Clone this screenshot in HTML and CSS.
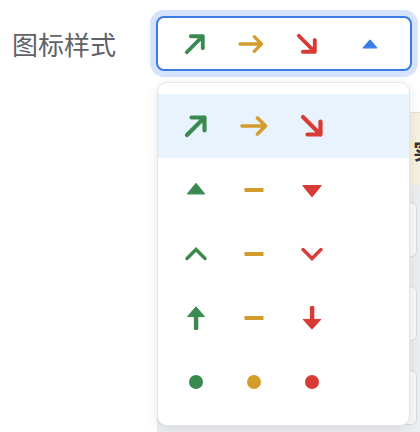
FILE: index.html
```html
<!DOCTYPE html>
<html lang="zh">
<head>
<meta charset="utf-8">
<title>图标样式</title>
<link rel="stylesheet" href="styles.css">
</head>
<body>
<div class="page">
  <div class="row">
    <div class="label">图标样式</div>
    <div class="select">
      <div class="sel-icons">
        <span class="cell green"><svg class="ico-s" viewBox="0 0 24 24"><path d="M3 21L20.5 3.5M7.5 3.5H20.5V16.5" fill="none" stroke="currentColor" stroke-width="4.2" stroke-linecap="round" stroke-linejoin="round"/></svg></span>
        <span class="cell orange"><svg class="ico-w-s" viewBox="0 0 28 24"><path d="M2 12H25.5M17.5 4L25.5 12L17.5 20" fill="none" stroke="currentColor" stroke-width="3.6" stroke-linecap="round" stroke-linejoin="round"/></svg></span>
        <span class="cell red"><svg class="ico-s" viewBox="0 0 24 24"><path d="M3 3L20.5 20.5M20.5 7.5V20.5H7.5" fill="none" stroke="currentColor" stroke-width="4.2" stroke-linecap="round" stroke-linejoin="round"/></svg></span>
      </div>
      <svg class="caret" viewBox="0 0 16 10"><path d="M8 1.2L14.8 8.8H1.2Z" fill="currentColor" stroke="currentColor" stroke-width="1.2" stroke-linejoin="round"/></svg>
    </div>
  </div>

  <div class="behind">
    <div class="notice">实时数据提示</div>
    <div class="cards">
      <div class="card"></div>
      <div class="card"></div>
      <div class="card"></div>
    </div>
  </div>

  <div class="dropdown">
    <div class="opt active">
      <span class="cell green"><svg class="ico" viewBox="0 0 24 24"><path d="M3 21L20.5 3.5M7.5 3.5H20.5V16.5" fill="none" stroke="currentColor" stroke-width="4.2" stroke-linecap="round" stroke-linejoin="round"/></svg></span>
      <span class="cell orange"><svg class="ico-w" viewBox="0 0 28 24"><path d="M2 12H25.5M17.5 4L25.5 12L17.5 20" fill="none" stroke="currentColor" stroke-width="3.6" stroke-linecap="round" stroke-linejoin="round"/></svg></span>
      <span class="cell red"><svg class="ico" viewBox="0 0 24 24"><path d="M3 3L20.5 20.5M20.5 7.5V20.5H7.5" fill="none" stroke="currentColor" stroke-width="4.2" stroke-linecap="round" stroke-linejoin="round"/></svg></span>
    </div>
    <div class="opt">
      <span class="cell green"><svg class="ico" viewBox="0 0 24 24"><path d="M3.5 15.8H20.5L12 5.6Z" fill="currentColor" stroke="currentColor" stroke-width="1.2" stroke-linejoin="round"/></svg></span>
      <span class="cell orange"><svg class="ico" viewBox="0 0 24 24"><rect x="2.5" y="10" width="19" height="4" rx="0.6" fill="currentColor"/></svg></span>
      <span class="cell red"><svg class="ico" viewBox="0 0 24 24"><path d="M3 7.6H21L12 18.6Z" fill="currentColor" stroke="currentColor" stroke-width="1.2" stroke-linejoin="round"/></svg></span>
    </div>
    <div class="opt">
      <span class="cell green"><svg class="ico" viewBox="0 0 24 24"><path d="M3 16.5L12 7.5L21 16.5" fill="none" stroke="currentColor" stroke-width="3.4" stroke-linecap="round" stroke-linejoin="miter"/></svg></span>
      <span class="cell orange"><svg class="ico" viewBox="0 0 24 24"><rect x="2.5" y="10" width="19" height="4" rx="0.6" fill="currentColor"/></svg></span>
      <span class="cell red"><svg class="ico" viewBox="0 0 24 24"><path d="M3 7.5L12 16.5L21 7.5" fill="none" stroke="currentColor" stroke-width="3.4" stroke-linecap="round" stroke-linejoin="miter"/></svg></span>
    </div>
    <div class="opt">
      <span class="cell green"><svg class="ico" viewBox="0 0 24 24"><path d="M12 0.8L20.5 10.6H3.5Z" fill="currentColor" stroke="currentColor" stroke-width="1" stroke-linejoin="round"/><rect x="9.9" y="9" width="4.4" height="15" rx="1.2" fill="currentColor"/></svg></span>
      <span class="cell orange"><svg class="ico" viewBox="0 0 24 24"><rect x="2.5" y="10" width="19" height="4" rx="0.6" fill="currentColor"/></svg></span>
      <span class="cell red"><svg class="ico" viewBox="0 0 24 24"><rect x="9.9" y="0" width="4.4" height="15" rx="1.2" fill="currentColor"/><path d="M12 23.2L20.8 13.4H3.2Z" fill="currentColor" stroke="currentColor" stroke-width="1" stroke-linejoin="round"/></svg></span>
    </div>
    <div class="opt">
      <span class="cell green"><svg class="ico" viewBox="0 0 24 24"><circle cx="12" cy="12" r="7" fill="currentColor"/></svg></span>
      <span class="cell orange"><svg class="ico" viewBox="0 0 24 24"><circle cx="12" cy="12" r="7" fill="currentColor"/></svg></span>
      <span class="cell red"><svg class="ico" viewBox="0 0 24 24"><circle cx="12" cy="12" r="7" fill="currentColor"/></svg></span>
    </div>
  </div>
</div>
</body>
</html>
```

FILE: styles.css
```css
html, body {
  margin: 0;
  padding: 0;
  background: #ffffff;
}

body {
  font-family: "Noto Sans CJK SC", "Noto Sans", sans-serif;
}

.page {
  position: relative;
  width: 420px;
  height: 432px;
  overflow: hidden;
}

.row {
  display: flex;
  align-items: center;
  padding: 16px 0 0 12px;
}

.label {
  width: 144px;
  font-size: 26px;
  line-height: 36px;
  color: #606266;
}

.select {
  box-sizing: border-box;
  width: 256px;
  height: 55px;
  border: 2px solid #3a7be6;
  border-radius: 8px;
  box-shadow: 0 0 0 6px #d7e3fb;
  display: flex;
  align-items: center;
  padding: 0 32px 0 26px;
  background: #fff;
}

.sel-icons {
  display: flex;
  gap: 34px;
}

.sel-icons .cell {
  width: 22px;
  height: 22px;
}

.cell {
  width: 24px;
  height: 24px;
  display: flex;
  justify-content: center;
  align-items: center;
}

.green { color: #3a8a50; }
.orange { color: #d39d2c; }
.red { color: #d83a35; }

.ico { width: 24px; height: 24px; flex: none; display: block; }
.ico-w { width: 28px; height: 24px; flex: none; display: block; }
.ico-s { width: 22px; height: 22px; flex: none; display: block; }
.ico-w-s { width: 26px; height: 22px; flex: none; display: block; }

.caret {
  margin-left: auto;
  width: 16px;
  height: 10px;
  color: #3a7be6;
  display: block;
}

.behind {
  margin: 41px 0 0 157px;
  width: 263px;
}

.notice {
  box-sizing: border-box;
  height: 73px;
  background: #f6f2e1;
  border-top: 1px solid #e6e3d6;
  padding-left: 256px;
  font-size: 22px;
  font-weight: 700;
  line-height: 72px;
  color: #333;
  white-space: nowrap;
  overflow: hidden;
}

.cards {
  background: #eceef2;
  padding: 17px 3px 20px 0;
  display: flex;
  flex-direction: column;
  gap: 29px;
}

.card {
  height: 55px;
  background: #f8f9fb;
  border: 1px solid #d9dce2;
  border-radius: 6px;
  box-sizing: border-box;
}

.dropdown {
  position: absolute;
  left: 157px;
  top: 82px;
  width: 253px;
  box-sizing: border-box;
  padding: 11px 0;
  background: #fff;
  border: 1px solid #e3e5ea;
  border-radius: 10px;
  box-shadow: 0 3px 14px rgba(0, 0, 0, 0.09);
}

.opt {
  height: 64px;
  display: flex;
  align-items: center;
  gap: 34px;
  padding-left: 26px;
}

.opt.active {
  background: #e9f3fe;
}
```
